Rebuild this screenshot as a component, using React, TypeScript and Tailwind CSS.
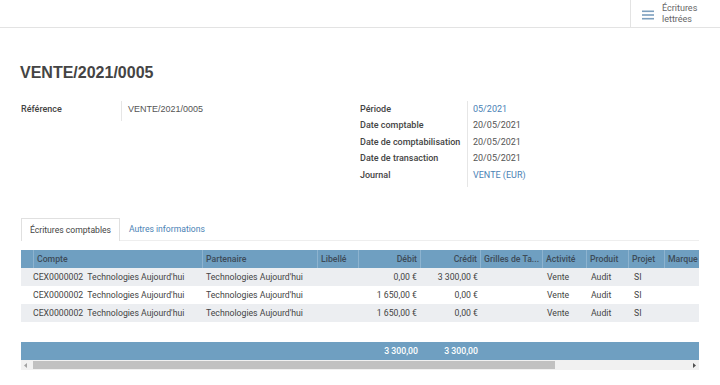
import React from "react";

const cols = [
  { key: "sel", w: 13, label: "", align: "left" },
  { key: "compte", w: 169, label: "Compte", align: "left" },
  { key: "part", w: 115, label: "Partenaire", align: "left" },
  { key: "lib", w: 41, label: "Libellé", align: "left" },
  { key: "debit", w: 62, label: "Débit", align: "right" },
  { key: "credit", w: 60, label: "Crédit", align: "right" },
  { key: "grilles", w: 62, label: "Grilles de Ta...", align: "left" },
  { key: "act", w: 44, label: "Activité", align: "left" },
  { key: "prod", w: 42, label: "Produit", align: "left" },
  { key: "proj", w: 36, label: "Projet", align: "left" },
  { key: "marque", w: 60, label: "Marque", align: "left" },
];

const rows = [
  { debit: "0,00 €", credit: "3 300,00 €" },
  { debit: "1 650,00 €", credit: "0,00 €" },
  { debit: "1 650,00 €", credit: "0,00 €" },
];

export default function App() {
  return (
    <div className="w-[720px] h-[385px] bg-white overflow-hidden text-[#4c4c4c]" style={{ fontFamily: "Roboto, 'Liberation Sans', sans-serif" }}>
      {/* top bar */}
      <div className="h-[28px] border-b border-[#e3e3e3] flex justify-end">
        <div className="w-[90px] border-l border-[#e3e3e3] flex items-start pl-[11px] pt-[3px] gap-[8px]">
          <svg width="12" height="10" viewBox="0 0 12 10" className="mt-[7px]">
            <rect x="0" y="0.5" width="12" height="1.6" fill="#7c9fbe" />
            <rect x="0" y="4.2" width="12" height="1.6" fill="#7c9fbe" />
            <rect x="0" y="7.9" width="12" height="1.6" fill="#7c9fbe" />
          </svg>
          <div className="text-[9px] leading-[11px] text-[#666]">
            <div>Écritures</div>
            <div>lettrées</div>
          </div>
        </div>
      </div>

      <div className="pl-[20px] pt-[36px]">
        <h1 className="text-[16px] leading-[18px] font-bold text-[#444]" style={{ fontFamily: "'Liberation Sans', Arial, sans-serif" }}>
          VENTE/2021/0005
        </h1>
      </div>

      {/* fields */}
      <div className="flex pt-[19px] text-[9px]">
        <div className="w-[340px] pl-[21px] flex">
          <div className="w-[100px] font-medium text-[#444] leading-[16.5px]">Référence</div>
          <div className="border-l border-[#e6e6e6] pl-[6px] h-[20px] leading-[16.5px] text-[#555]" style={{ fontFamily: "'Liberation Sans', Arial, sans-serif" }}>
            VENTE/2021/0005
          </div>
        </div>
        <div className="pl-[20px] flex">
          <div className="w-[107px] font-medium text-[#444] leading-[16.4px]">
            <div>Période</div>
            <div>Date comptable</div>
            <div>Date de comptabilisation</div>
            <div>Date de transaction</div>
            <div>Journal</div>
          </div>
          <div className="border-l border-[#e6e6e6] pl-[5px] leading-[16.4px] text-[#555] pb-[4px]">
            <div className="text-[#4a82b5]">05/2021</div>
            <div>20/05/2021</div>
            <div>20/05/2021</div>
            <div>20/05/2021</div>
            <div className="text-[#4a82b5]">VENTE (EUR)</div>
          </div>
        </div>
      </div>

      {/* tabs */}
      <div className="mt-[31px] mx-[21px] flex border-b border-[#eeeeee] text-[8.6px] h-[23px]">
        <div className="border border-b-0 border-[#e0e0e0] px-[8px] flex items-center text-[#444] bg-white -mb-px">
          Écritures comptables
        </div>
        <div className="px-[9px] flex items-center text-[#4a82b5]">Autres informations</div>
      </div>

      {/* table */}
      <div className="mt-[9px] mx-[21px] w-[678px] overflow-hidden text-[8.7px]">
        <div className="flex h-[18px] bg-[#6f9fc1] text-[#3d4b58] font-medium">
          {cols.map((c) => (
            <div
              key={c.key}
              className={`shrink-0 h-full flex items-center px-[3px] whitespace-nowrap overflow-hidden border-r border-[#8db3cf] ${c.align === "right" ? "justify-end" : ""}`}
              style={{ width: c.w }}
            >
              {c.label}
            </div>
          ))}
        </div>
        {rows.map((r, i) => (
          <div key={i} className={`flex h-[18px] items-center text-[#444] ${i % 2 === 0 ? "bg-[#eceef1]" : "bg-white"}`}>
            <div className="shrink-0 w-[182px] pl-[12px] whitespace-nowrap">CEX0000002&nbsp; Technologies Aujourd'hui</div>
            <div className="shrink-0 w-[115px] px-[3px] whitespace-nowrap">Technologies Aujourd'hui</div>
            <div className="shrink-0 w-[41px]"></div>
            <div className="shrink-0 w-[62px] px-[4px] text-right whitespace-nowrap">{r.debit}</div>
            <div className="shrink-0 w-[60px] px-[3px] text-right whitespace-nowrap">{r.credit}</div>
            <div className="shrink-0 w-[62px]"></div>
            <div className="shrink-0 w-[44px] pl-[4px]">Vente</div>
            <div className="shrink-0 w-[42px] pl-[4px]">Audit</div>
            <div className="shrink-0 w-[36px] pl-[5px]">SI</div>
            <div className="shrink-0 w-[60px]"></div>
          </div>
        ))}
        <div className="h-[20px]"></div>
        <div className="flex h-[18px] bg-[#6f9fc1] text-white font-medium items-center">
          <div className="shrink-0 w-[338px]"></div>
          <div className="shrink-0 w-[62px] px-[3px] text-right whitespace-nowrap">3 300,00</div>
          <div className="shrink-0 w-[60px] px-[3px] text-right whitespace-nowrap">3 300,00</div>
        </div>
        {/* scrollbar */}
        <div className="flex h-[10px] bg-[#f1f1f1] items-center">
          <div className="w-[10px] h-full flex items-center justify-center">
            <svg width="4" height="5" viewBox="0 0 4 5"><path d="M3 0 L0 2.5 L3 5 Z" fill="#a3a3a3" /></svg>
          </div>
          <div className="ml-[2px] w-[522px] h-[8px] bg-[#c1c1c1]"></div>
          <div className="flex-1"></div>
          <div className="w-[10px] h-full flex items-center justify-center">
            <svg width="4" height="5" viewBox="0 0 4 5"><path d="M1 0 L4 2.5 L1 5 Z" fill="#505050" /></svg>
          </div>
        </div>
      </div>
    </div>
  );
}
